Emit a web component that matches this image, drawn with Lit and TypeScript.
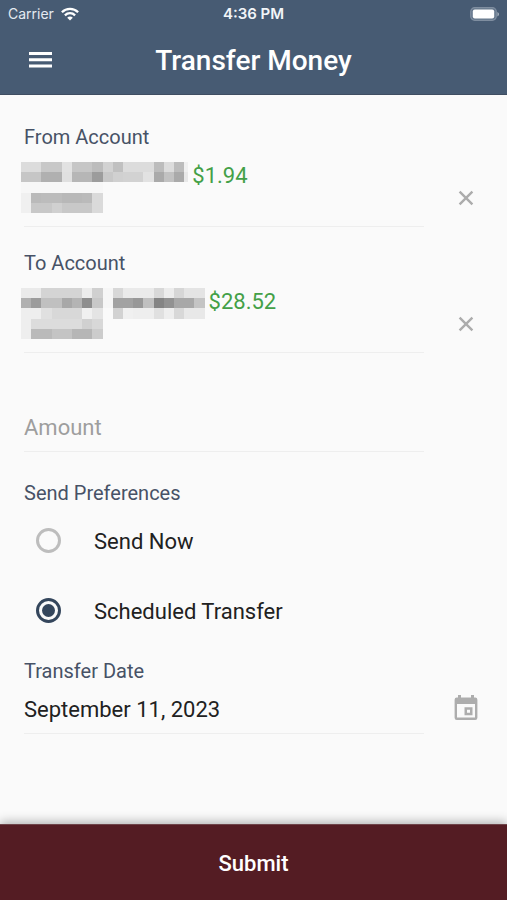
import { LitElement, html, svg, css } from "lit";
import { customElement, property, state } from "lit/decorators.js";

/** Redacted text as rows of two-digit hex grey levels; ".." leaves a cell clear. */
const FROM_MASK = [
  "dc dc c8 c8 e2 c6 c6 bc d2 c0 dc dc dc bc dc bc f0",
  "c6 c6 b0 b0 e0 b6 b6 9c c8 d0 d2 d2 e2 aa c2 aa aa",
  "f7 f7 f7 f7 f7 f7 f7 f7 .. .. .. .. .. .. .. .. ..",
  "f0 ba bc bc b8 b8 ba da .. .. .. .. .. .. .. .. ..",
  "f0 c8 c8 d0 c8 c8 c8 da .. .. .. .. .. .. .. .. ..",
].map((r) => r.replace(/ \S\S$/, (last) => (last === " aa" ? " e8" : last)));
const TO_MASK = [
  "ea ea d4 d4 d4 d4 ec d0 f6 d8 ea ea ea d8 ec d6 e4 e4",
  "b0 9c c0 c0 a8 b4 8e c8 f6 a2 a2 98 c0 84 92 a8 a8 c4",
  "ee ee e0 d8 d8 d8 f0 e4 .. d2 f0 ee ee e0 ee d8 e8 e8",
  "ee dc dc dc dc dc d0 d8 .. .. .. .. .. .. .. .. .. ..",
  "ee ba ba c4 c4 b6 b6 cc .. .. .. .. .. .. .. .. .. ..",
];

@customElement("redacted-text")
export class RedactedText extends LitElement {
  @property({ attribute: false }) rows: string[] = [];
  /** Width of the last column, as a share of a full cell. */
  @property({ type: Number }) tail = 1;

  static styles = css`
    :host { display: block; flex: none; }
    .mosaic { display: block; height: 51px; width: auto; }
  `;

  render() {
    const grid = this.rows.map((r) => r.split(" "));
    const cols = grid.length ? grid[0].length - 1 + this.tail : 1;
    return html`<svg class="mosaic" viewBox="0 0 ${cols} ${grid.length}" shape-rendering="crispEdges" aria-hidden="true">
      ${grid.map((row, y) =>
        row.map((c, x) =>
          c === ".." ? null : svg`<rect x=${x} y=${y} width="1" height="1" fill=${"#" + c + c + c}></rect>`
        )
      )}
    </svg>`;
  }
}

@customElement("app-root")
export class AppRoot extends LitElement {
  @state() private when = "scheduled";

  static styles = css`
    :host {
      display: flex;
      flex-direction: column;
      min-height: 100vh;
      background: #fafafa;
      color: #212121;
      font-family: Roboto, "Liberation Sans", sans-serif;
      font-size: 22px;
      line-height: 28px;
    }
    * { box-sizing: border-box; }
    button, input { font: inherit; color: inherit; margin: 0; padding: 0; border: 0; background: none; border-radius: 0; }
    button { cursor: pointer; }
    svg { display: block; }
    .top { background: #475b73; color: #fff; border-bottom: 1px solid #3f4d61; }
    .status {
      display: grid;
      grid-template-columns: 1fr auto 1fr;
      align-items: center;
      height: 28px;
      padding: 0 8px;
      font-family: Inter, sans-serif;
      font-size: 14px;
      line-height: 20px;
    }
    .carrier { display: flex; align-items: center; gap: 7px; color: #e4eaf1; }
    .clock { font-weight: 600; font-size: 15px; color: #f2f5f8; }
    .battery { justify-self: end; }
    .bar {
      display: grid;
      grid-template-columns: 32px 1fr 32px;
      align-items: center;
      height: 66px;
      padding: 0 24px;
    }
    .menu { display: grid; place-items: center; height: 32px; }
    .title { margin: 0; text-align: center; font-size: 28px; line-height: 36px; font-weight: 500; }
    .form { flex: 1; display: flex; flex-direction: column; padding: 28px 24px 32px; }
    .label { display: block; margin: 0; padding: 0; color: #475266; font-size: 20px; line-height: 28px; font-weight: 400; }
    .row { display: grid; grid-template-columns: 1fr 59px; }
    .field { border-bottom: 1px solid #eeeeee; }
    .account { margin-bottom: 22px; }
    .value { display: flex; gap: 4px; height: 64px; margin: 11px 0 0 -3px; }
    .amount { color: #43a047; }
    .action { display: grid; place-items: center; justify-self: end; align-self: end; width: 36px; height: 36px; margin-right: -1px; }
    .clear { margin-bottom: 11px; }
    .pick { margin-bottom: 8px; }
    .money { margin-top: 28px; margin-bottom: 27px; }
    .text { display: block; width: 100%; height: 48px; outline: none; }
    .text::placeholder { color: #9e9e9e; opacity: 1; }
    .prefs { margin: 0; padding: 0; border: 0; min-width: 0; }
    .option { display: flex; align-items: center; gap: 33px; height: 70px; padding-left: 12px; }
    .options { margin-bottom: 10px; }
    .radio {
      appearance: none;
      display: grid;
      place-items: center;
      width: 25px;
      height: 25px;
      margin-bottom: 4px;
      border: 3px solid #bdbdbd;
      border-radius: 50%;
    }
    .radio:checked { border-color: #34465c; }
    .radio:checked::before { content: ""; width: 13px; height: 13px; border-radius: 50%; background: #34465c; }
    .submit {
      height: 76px;
      padding-top: 2px;
      background: #541c23;
      color: #fff;
      font-weight: 500;
      border-top: 1px solid #6e4449;
      box-shadow: 0 -2px 10px rgba(0, 0, 0, 0.3);
    }
  `;

  private account(id: string, label: string, mask: string[], tail: number, amount: string) {
    return html`<section class="row account" aria-labelledby=${id}>
      <div class="field">
        <h2 class="label" id=${id}>${label}</h2>
        <div class="value">
          <redacted-text .rows=${mask} .tail=${tail}></redacted-text>
          <span class="amount">${amount}</span>
        </div>
      </div>
      <button class="action clear" type="button" aria-label="Clear ${label}">
        <svg width="16" height="16" viewBox="0 0 16 16" fill="none" stroke="#acacac" stroke-width="2.4">
          <path d="M1.6 1.6 14.4 14.4M14.4 1.6 1.6 14.4" />
        </svg>
      </button>
    </section>`;
  }

  private option(value: string, label: string) {
    return html`<label class="option">
      <input class="radio" type="radio" name="when" .value=${value} .checked=${this.when === value}
        @change=${() => (this.when = value)} />
      <span>${label}</span>
    </label>`;
  }

  render() {
    return html`
      <header class="top">
        <div class="status">
          <span class="carrier">Carrier
            <svg width="18" height="14" viewBox="0 0 18 14" fill="none" stroke="#fff" stroke-width="2.3">
              <path d="M.9 5.2C5.4.7 12.6.7 17.1 5.2" />
              <path d="M3.9 8.3C6.8 5.5 11.2 5.5 14.1 8.3" />
              <path d="M9 13.6 6.2 10.7C7.8 9.2 10.2 9.2 11.8 10.7Z" fill="#fff" stroke="none" />
            </svg>
          </span>
          <span class="clock">4:36 PM</span>
          <svg class="battery" width="30" height="14" viewBox="0 0 30 14">
            <rect x="1.700" y=".7" width="25.6" height="12.6" rx="4" fill="#66788d" stroke="#7f8ea0" stroke-width="1.2" />
            <rect x="3.800" y="2.5" width="21.4" height="9" rx="2" fill="#fff" />
            <path d="M28.4 5v4.4c1-.5 1.600-1.2 1.600-2.2s-.6-1.7-1.600-2.2z" fill="#a3aebb" />
          </svg>
        </div>
        <div class="bar">
          <button class="menu" type="button" aria-label="Menu">
            <svg width="23" height="18" viewBox="0 0 23 18" fill="#fff">
              <path d="M0 0h23v3H0zM0 6.3h23v3H0zM0 12.6h23v3H0z" />
            </svg>
          </button>
          <h1 class="title">Transfer Money</h1>
        </div>
      </header>

      <main class="form">
        ${this.account("from", "From Account", FROM_MASK, 0.4, "$1.94")}
        ${this.account("to", "To Account", TO_MASK, 1, "$28.52")}

        <div class="row money">
          <div class="field"><input class="text" type="text" inputmode="decimal" placeholder="Amount" aria-label="Amount" /></div>
        </div>

        <fieldset class="prefs">
          <legend class="label">Send Preferences</legend>
          <div class="options">
            ${this.option("now", "Send Now")} ${this.option("scheduled", "Scheduled Transfer")}
          </div>
        </fieldset>

        <div class="row">
          <div class="field">
            <label class="label" for="date">Transfer Date</label>
            <input class="text" id="date" type="text" readonly .value=${"September 11, 2023"} />
          </div>
          <button class="action pick" type="button" aria-label="Choose date">
            <svg width="24" height="26" viewBox="0 0 24 26" fill="#adadad">
              <path fill-rule="evenodd" d="M4 0h3v2.6h10V0h3v2.6h1.200A2.200 2.200 0 0 1 23.400 4.800v18A2.200 2.200 0 0 1 21.200 25H2.800A2.200 2.200 0 0 1 .6 22.800v-18A2.200 2.200 0 0 1 2.800 2.600H4zM3 9v13.600h18V9z" />
              <path fill-rule="evenodd" d="M10.500 12.200h8v8h-8zM13 14.700v3h3v-3z" />
            </svg>
          </button>
        </div>
      </main>

      <button class="submit" type="button">Submit</button>
    `;
  }
}
